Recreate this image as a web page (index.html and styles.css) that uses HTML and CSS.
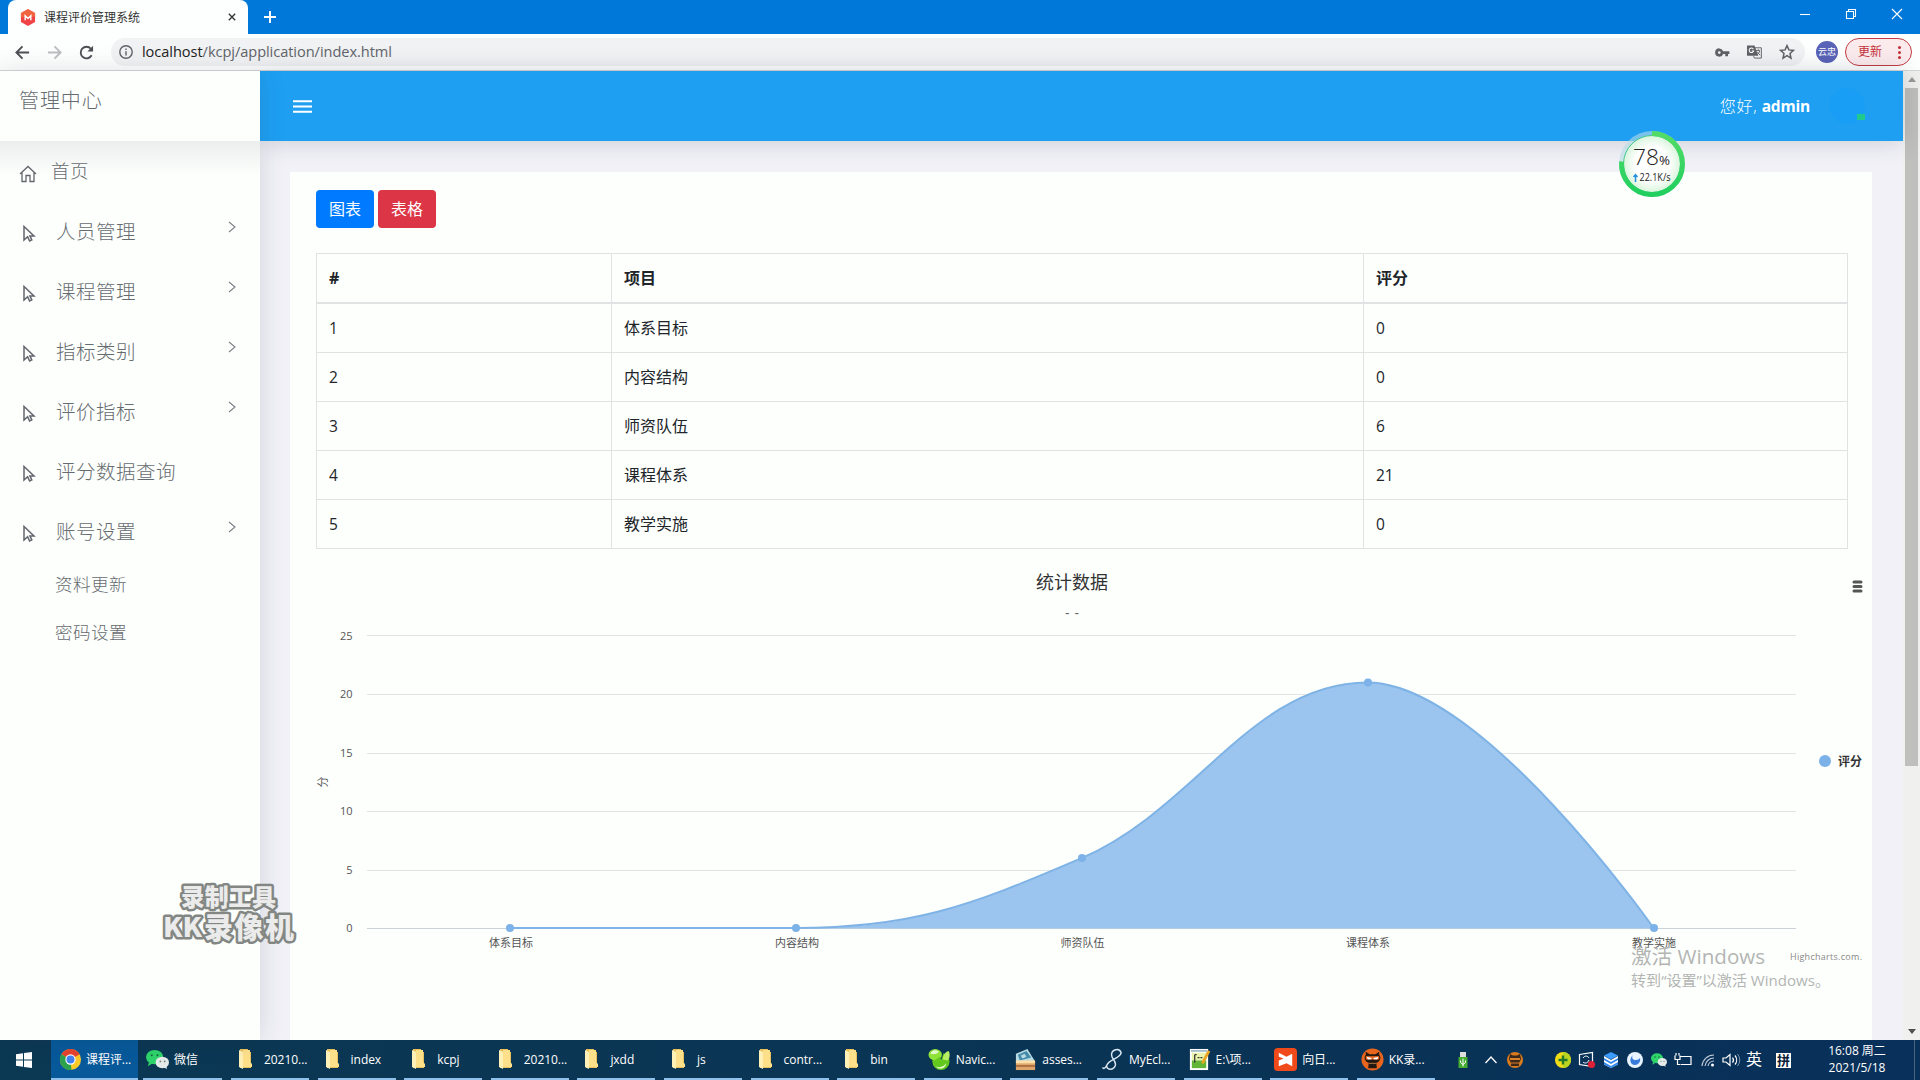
FILE: index.html
```html
<!DOCTYPE html>
<html lang="zh-CN">
<head>
<meta charset="utf-8">
<title>课程评价管理系统</title>
<link rel="stylesheet" href="styles.css">
</head>
<body>
<svg class="defs" aria-hidden="true">
  <symbol id="pointer" viewBox="0 0 14 18"><path d="M2 1.500V15l3.600-3.300L7.600 16l2.200-1-1.900-4.100H12z"/></symbol>
  <symbol id="chevron" viewBox="0 0 10 14"><path d="M2 2l6 5-6 5"/></symbol>
  <symbol id="folder" viewBox="0 0 14 20"><path fill="#e9bf5c" d="M1 0h8v3h3v16H1z"/><path fill="#ffe08a" d="M4 1h7v12l2 2v3H4z"/><path fill="#fff0b8" d="M0 1l4 2v17l-4-2z"/></symbol>
  <symbol id="wechat" viewBox="0 0 24 20"><ellipse cx="9" cy="7.500" rx="9" ry="7.500" fill="#2fd46b"/><path d="M3 13l-1 4 5-3z" fill="#2fd46b"/><ellipse cx="17" cy="13" rx="7" ry="6" fill="#e4ebe8"/><path d="M18 18l4 2-1-4z" fill="#e4ebe8"/><g fill="#126b3a"><circle cx="6" cy="5.500" r="1.100"/><circle cx="12" cy="5.500" r="1.100"/></g><g fill="#728078"><circle cx="15" cy="12" r=".9"/><circle cx="19.500" cy="12" r=".9"/></g></symbol>
  <symbol id="ninja" viewBox="0 0 24 24"><circle cx="12" cy="12" r="11.500" fill="#e8651e"/><path fill="#241812" d="M5 4l4 2.500h6L19 4v3c1 1 1.500 3 1 5-1 2-3 3.500-4 3.500l.5 5.500h-9l.5-5.500C7 15.500 5 14 4 12c-.5-2 0-4 1-5z"/><path fill="#e8651e" d="M5 8.500h14v3.500H5z"/><path fill="#fff" d="M6 9l5 1.500v1.200L7 12zM18 9l-5 1.500v1.200l4 .3z"/><path d="M8 15.500h8v1H8z" fill="#b9793f"/></symbol>
</svg>
<div class="screen">
  <header class="tabs">
    <div class="tab">
      <svg class="favicon" viewBox="0 0 16 18"><path fill="#ee4446" d="M8 0l7.500 4.200v9.600L8 18 .5 13.800V4.200z"/><path fill="#f47a3c" d="M8 0l7.500 4.200V8L.5 9V4.200z" opacity=".6"/><path d="M5 12V7l3 3 3-3v5" fill="none" stroke="#fff" stroke-width="1.500"/></svg>
      <span class="tab-title">课程评价管理系统</span>
      <svg class="tab-close" viewBox="0 0 10 10"><path d="M1 1l8 8M9 1l-8 8"/></svg>
    </div>
    <svg class="plus" viewBox="0 0 12 12"><path d="M6 0v12M0 6h12"/></svg>
    <div class="window-buttons">
      <svg viewBox="0 0 12 12"><path d="M1 6.500h10"/></svg>
      <svg viewBox="0 0 12 12"><path d="M1.500 3.500h7v7h-7zM3.500 3.500v-2h7v7h-2"/></svg>
      <svg viewBox="0 0 12 12"><path d="M1 1l10 10M11 1L1 11"/></svg>
    </div>
  </header>
  <div class="toolbar">
    <svg class="nav" viewBox="0 0 16 16"><path d="M15 8H2M8 1.500L1.500 8 8 14.500"/></svg>
    <svg class="nav dim" viewBox="0 0 16 16"><path d="M1 8h13M8 1.500L14.500 8 8 14.500"/></svg>
    <svg class="nav" viewBox="0 0 16 16"><path d="M13.500 11A6.200 6.200 0 1 1 12.700 4"/><path class="solid" d="M15 .8v6H9z"/></svg>
    <div class="address">
      <svg class="info" viewBox="0 0 14 14"><circle cx="7" cy="7" r="6.200"/><path d="M7 6.200v4.200M7 3.400v1.500"/></svg>
      <span class="url"><b>localhost</b>/kcpj/application/index.html</span>
      <svg class="key" viewBox="0 0 16 12"><path fill-rule="evenodd" d="M4.500 1.500a4.500 4.500 0 1 0 4.200 6H11V10h3V7.500h1.500v-3H8.700A4.500 4.500 0 0 0 4.500 1.500zm0 3a1.500 1.500 0 1 1 0 3 1.500 1.500 0 0 1 0-3z"/></svg>
      <svg class="translate" viewBox="0 0 16 16"><path d="M0 1h8l4 11H0z" fill="#5f6368"/><path d="M8 3.500h7.300v11H8l-1-2" fill="none" stroke="#5f6368"/><path d="M9.500 6.500h4.500M12 5v1.500M13.500 7c-.5 2-1.500 3-3 4M11 8l3 3.500" fill="none" stroke="#5f6368"/><path d="M6.800 5A2.400 2.400 0 1 0 7 7H5" fill="none" stroke="#fff" stroke-width="1.100"/></svg>
      <svg class="star" viewBox="0 0 16 16"><path d="M8 1.600l1.900 4.300 4.600.5-3.500 3.100 1 4.600L8 11.700l-4 2.400 1-4.600L1.500 6.400l4.600-.5z"/></svg>
    </div>
    <div class="avatar">云忠</div>
    <div class="update">更新<i class="dots"></i></div>
  </div>

  <div class="page">
    <aside class="sidebar">
      <div class="brand">管理中心</div>
      <nav class="menu">
        <a class="home"><svg class="house" viewBox="0 0 18 18"><path d="M1 9l8-7.500L17 9M3 7.500V16.500h4v-6h4v6h4V7.500"/></svg><span>首页</span></a>
        <a><svg class="ptr"><use href="#pointer"/></svg><span>人员管理</span><svg class="chev"><use href="#chevron"/></svg></a>
        <a><svg class="ptr"><use href="#pointer"/></svg><span>课程管理</span><svg class="chev"><use href="#chevron"/></svg></a>
        <a><svg class="ptr"><use href="#pointer"/></svg><span>指标类别</span><svg class="chev"><use href="#chevron"/></svg></a>
        <a><svg class="ptr"><use href="#pointer"/></svg><span>评价指标</span><svg class="chev"><use href="#chevron"/></svg></a>
        <a><svg class="ptr"><use href="#pointer"/></svg><span>评分数据查询</span></a>
        <a><svg class="ptr"><use href="#pointer"/></svg><span>账号设置</span><svg class="chev"><use href="#chevron"/></svg></a>
        <div class="sub">资料更新</div>
        <div class="sub">密码设置</div>
      </nav>
    </aside>
    <main class="main">
      <div class="topbar">
        <svg class="burger" viewBox="0 0 20 14"><path d="M0 1.500h20M0 7h20M0 12.500h20"/></svg>
        <div class="hello"><span>您好,</span> <b>admin</b></div>
        <div class="photo"><i></i></div>
      </div>
      <div class="content">
        <section class="card">
          <div class="buttons"><button class="blue">图表</button><button class="red">表格</button></div>
          <table class="scores">
            <colgroup><col class="c1"><col class="c2"><col></colgroup>
            <thead><tr><th>#</th><th>项目</th><th>评分</th></tr></thead>
            <tbody>
              <tr><td>1</td><td>体系目标</td><td>0</td></tr>
              <tr><td>2</td><td>内容结构</td><td>0</td></tr>
              <tr><td>3</td><td>师资队伍</td><td>6</td></tr>
              <tr><td>4</td><td>课程体系</td><td>21</td></tr>
              <tr><td>5</td><td>教学实施</td><td>0</td></tr>
            </tbody>
          </table>
          <svg class="chart" viewBox="290 549 1582 491">
            <text class="ctitle" x="1072" y="589">统计数据</text>
            <text class="csub" x="1065" y="618" textLength="14">--</text>
            <path class="burger-sm" d="M1854 582h7M1854 586.500h7M1854 591h7"/>
            <path class="grid" d="M367 635.500h1429M367 694.500h1429M367 753.500h1429M367 811.500h1429M367 870.500h1429"/>
            <path class="axis" d="M367 928.500h1429"/>
            <path class="area" d="M510 928.500C510 928.500 681.500 928.500 795.800 928.500C910.100 928.500 967.200 907.400 1081.500 858.200C1195.700 809 1252.800 682.400 1367.500 682.400C1481.300 682.400 1653.500 928.500 1653.500 928.500z"/>
            <path class="line" d="M510 928C510 928 681.500 928 795.800 928C910.100 928 967.200 907.400 1081.500 858.200C1195.700 809 1252.800 682.400 1367.500 682.400C1481.300 682.400 1653.500 928 1653.500 928"/>
            <g class="points"><circle cx="510" cy="928" r="4"/><circle cx="796" cy="928" r="4"/><circle cx="1082" cy="858" r="4"/><circle cx="1368" cy="682.500" r="4"/><circle cx="1654" cy="928" r="4"/><circle cx="1825" cy="761" r="6"/></g>
            <g class="ylab"><text x="352.500" y="640">25</text><text x="352.500" y="698">20</text><text x="352.500" y="757">15</text><text x="352.500" y="815">10</text><text x="352.500" y="874">5</text><text x="352.500" y="932">0</text></g>
            <g class="xlab"><text x="511" y="947">体系目标</text><text x="797" y="947">内容结构</text><text x="1082.500" y="947">师资队伍</text><text x="1368" y="947">课程体系</text><text x="1654" y="947">教学实施</text></g>
            <text class="ytitle" transform="translate(327 782) rotate(-90)">分</text>
            <text class="legend" x="1838" y="766">评分</text>
            <text class="credit" x="1790" y="960" textLength="72">Highcharts.com.</text>
          </svg>
        </section>
      </div>
    </main>
    <div class="scrollbar"><i class="up"></i><div class="thumb"></div><i class="down"></i></div>
  </div>

  <footer class="taskbar">
    <svg class="start" viewBox="0 0 16 16"><path d="M0 2.200L7 1.200V7.600H0zM8 1l8-1v7.600H8zM0 8.400h7v6.400l-7-1zM8 8.400h8V16l-8-1z"/></svg>
    <div class="task active"><svg viewBox="0 0 24 24"><circle cx="12" cy="12" r="11" fill="#fbc928"/><path fill="#e5432f" d="M12 12L2.500 6.500a11 11 0 0 1 19 0z"/><path fill="#2da24c" d="M12 12l1 10.900A11 11 0 0 1 2.500 6.500z"/><circle cx="12" cy="12" r="5.400" fill="#fff"/><circle cx="12" cy="12" r="4.200" fill="#4382ee"/></svg><span>课程评...</span></div>
    <div class="task wx"><svg><use href="#wechat"/></svg><span>微信</span></div>
    <div class="task"><svg class="fold"><use href="#folder"/></svg><span>20210...</span></div>
    <div class="task"><svg class="fold"><use href="#folder"/></svg><span>index</span></div>
    <div class="task"><svg class="fold"><use href="#folder"/></svg><span>kcpj</span></div>
    <div class="task"><svg class="fold"><use href="#folder"/></svg><span>20210...</span></div>
    <div class="task"><svg class="fold"><use href="#folder"/></svg><span>jxdd</span></div>
    <div class="task"><svg class="fold"><use href="#folder"/></svg><span>js</span></div>
    <div class="task"><svg class="fold"><use href="#folder"/></svg><span>contr...</span></div>
    <div class="task"><svg class="fold"><use href="#folder"/></svg><span>bin</span></div>
    <div class="task"><svg viewBox="0 0 24 24"><circle cx="13.500" cy="14" r="9" fill="#63c91e"/><path fill="#0b3654" d="M11.500 12L15 2l2 .5-3 9.500z"/><ellipse cx="7.500" cy="7" rx="7" ry="6" fill="#8ee238"/><path fill="#63c91e" d="M7 13l5-4 2 4-4 4z"/><path fill="#b7ee62" d="M15.500 12c0-4 2-8 6-9 2 3 1 8-1 10z"/><path fill="#e3facb" d="M2.500 6c1-4 6-5 9-2-2 2-5 3-9 2zM8 19c4 2 8 1 11-3 0 5-7 8-11 3z"/></svg><span>Navic...</span></div>
    <div class="task"><svg viewBox="0 0 24 24"><path fill="#b7dbe5" d="M2 6l12-5 8 13H2z"/><path fill="#458ba8" d="M4 7l9-4 5 7-12 3z"/><path fill="#b7dbe5" d="M7 8l4-2 2 3-4 2z"/><path fill="#dfa56b" d="M2 14h20v9H2z"/><path fill="#ffe0a9" d="M2 13h20v3H2z"/><path fill="#9d6037" d="M2 18h20v1.500H2z"/></svg><span>asses...</span></div>
    <div class="task"><svg viewBox="0 0 24 24"><path d="M21 5C19-1 11 2 11 7c0 5 5 6 4 11-2 6-10 5-9 0C8 12 20 11 21 5zM6 18c-2 4-4 4-4 2" fill="none" stroke="#d8e7f2" stroke-width="1.500"/></svg><span>MyEcl...</span></div>
    <div class="task"><svg viewBox="0 0 24 24"><path fill="#fff" d="M2 1h19v22H2z"/><path fill="#e9f3a9" d="M4 5h15v8H4z"/><path fill="#62b535" d="M4 13h15v8H4z"/><path d="M3 2h17v2H3z" fill="#a7bdc9"/><path fill="none" stroke="#333" stroke-width="1.300" d="M7 7v8M7 7h2M10 10h2M13 10h2"/><path d="M22 3l-7 13" stroke="#eaa522" stroke-width="3"/></svg><span>E:\项...</span></div>
    <div class="task"><svg viewBox="0 0 24 24"><rect width="24" height="24" rx="4" fill="#f04a1b"/><path fill="#fff" d="M5 5l8 4 6-3v13l-6-3-8 3v-6l5-2-5-2z"/></svg><span>向日...</span></div>
    <div class="task"><svg><use href="#ninja"/></svg><span>KK录...</span></div>
    <div class="tray">
      <svg class="usb" viewBox="0 0 20 20"><path fill="#ddd" d="M7 2h6v5H7z"/><path fill="#43ac31" d="M5.500 7h9v11h-9z"/><path d="M10 8.500v8M7.500 10.500v2l2.500 2 2.500-2v-2" fill="none" stroke="#fff"/></svg>
      <svg class="caret" viewBox="0 0 20 20"><path d="M4.500 13l5.500-6 5.500 6" fill="none" stroke="#fff" stroke-width="1.300"/></svg>
      <svg class="nin" viewBox="0 0 20 20"><circle cx="10" cy="10" r="8" fill="#d87a1d"/><path fill="#3b2718" d="M5 4l3 1.500h4L15 4l1 5-2 4v3H6v-3L4 9z"/><path fill="#d9812c" d="M5 8h10v2H5zM6 12.500h8v1H6z"/></svg>
      <svg viewBox="0 0 20 20"><circle cx="10" cy="10" r="8" fill="#f1dc18"/><path d="M10 2a8 8 0 0 1 0 16z" fill="#b9d421"/><path d="M10 5.500v9M5.500 10h9" stroke="#24782a" stroke-width="2.400"/></svg>
      <svg viewBox="0 0 20 20"><path d="M2.500 4.500l13-2v14l-13-2z" fill="none" stroke="#fff" stroke-width="1.200"/><path d="M6 8c2-3 5-2 6 0M12 10c-1 3-4 4-6 2" fill="none" stroke="#fff"/><circle cx="14.500" cy="14.500" r="3.600" fill="#e02036"/></svg>
      <svg viewBox="0 0 20 20"><path fill="#3b9bff" d="M10 2l7 3.500-7 4-7-4z"/><path fill="#fff" d="M3 6l7 4 7-4v8.500L10 18l-7-3.500z"/><path fill="#2f86ed" d="M3 8l7 4 7-4v2l-7 4-7-4zM3 12l7 4 7-4v2.500L10 18l-7-3.500z"/></svg>
      <svg viewBox="0 0 20 20"><circle cx="10" cy="10" r="8" fill="#e7f3ff"/><path fill="#397bdd" d="M8 5c-2 3 0 5 3 5 2 0 3-1 4-2 1 4-2 7-5 7-4 0-7-5-2-10z"/></svg>
      <svg><use href="#wechat" x="2" y="3" width="16" height="14"/></svg>
      <svg viewBox="0 0 20 20"><path fill="none" stroke="#fff" stroke-width="1.200" d="M7 6.500h11v8H8M2 5.500v4h5v-4M4.500 9.500v5h3M3 3v2.500M6 3v2.500"/></svg>
      <svg class="wifi" viewBox="0 0 20 20"><path fill="none" stroke="#c3ced8" stroke-width="1.100" d="M4 16A12 12 0 0 1 16 5M7 16a9 9 0 0 1 9-8M10 16a6 6 0 0 1 6-5"/><circle cx="14.500" cy="15" r="1.500" fill="#fff"/></svg>
      <svg class="sound" viewBox="0 0 20 20"><path fill="none" stroke="#fff" stroke-width="1.200" d="M2 8v4h3l4 3.500v-11L5 8zM11.500 7.500a4 4 0 0 1 0 5M14 5.500a7 7 0 0 1 0 9"/><path d="M16.500 4a9 9 0 0 1 0 12" fill="none" stroke="#7a93aa"/></svg>
      <span class="lang">英</span><span class="ime">拼</span>
      <div class="clock"><span>16:08 周二</span><span>2021/5/18</span></div>
      <i class="peek"></i>
    </div>
  </footer>

  <svg class="ball" viewBox="0 0 70 70">
    <defs><radialGradient id="glow"><stop offset=".6" stop-color="#fff"/><stop offset="1" stop-color="#d9f5dc"/></radialGradient><linearGradient id="ring" x2="0" y2="1"><stop stop-color="#52dc66"/><stop offset="1" stop-color="#20cf5e"/></linearGradient></defs>
    <circle cx="35" cy="35" r="33" fill="#b5dce5" opacity=".6"/>
    <circle cx="35" cy="35" r="28.500" fill="url(#glow)" stroke="#43c98b"/>
    <path d="M35 4.500A30.500 30.500 0 1 1 4.600 32.500" fill="none" stroke="url(#ring)" stroke-width="5"/>
    <text class="pct" x="16" y="36" textLength="26" lengthAdjust="spacingAndGlyphs">78</text><text class="pc" x="42" y="36" textLength="11" lengthAdjust="spacingAndGlyphs">%</text>
    <path d="M18.500 53v-7M16.500 48l2-2.300 2 2.300" fill="none" stroke="#2791dc" stroke-width="1.500"/>
    <text class="rate" x="22.500" y="52" textLength="31" lengthAdjust="spacingAndGlyphs">22.1K/s</text>
  </svg>
  <svg class="recorder" viewBox="150 870 160 86">
    <text x="181" y="906" font-size="24" textLength="95">录制工具</text>
    <text x="163" y="937" font-size="27" textLength="39" lengthAdjust="spacingAndGlyphs">KK</text>
    <text x="204" y="939" font-size="29" textLength="90">录像机</text>
  </svg>
  <svg class="activate" viewBox="1630 940 210 60">
    <text x="1631" y="964" font-size="20.500" textLength="134" lengthAdjust="spacingAndGlyphs">激活 Windows</text>
    <text x="1631" y="986" font-size="15" textLength="199" lengthAdjust="spacingAndGlyphs">转到“设置”以激活 Windows。</text>
  </svg>
</div>
</body>
</html>
```
FILE: styles.css
```css
* { box-sizing: border-box; }
body { margin: 0; overflow: hidden; font-family: "Open Sans", "Noto Sans CJK SC", sans-serif; color: #212529; }
svg { display: block; flex: none; }
.defs { position: absolute; width: 0; height: 0; }
.screen { position: relative; width: 1920px; height: 1080px; display: flex; flex-direction: column; background: #fdfffd; }

/* browser window */
.tabs { height: 34px; flex: none; display: flex; align-items: center; background: #0078d9; }
.tab { width: 240px; height: 34px; margin-left: 8px; padding: 0 12px; display: flex; align-items: center; background: #fdfffe; border-radius: 8px 8px 0 0; }
.favicon { width: 16px; height: 17px; }
.tab-title { margin-left: 8px; font-size: 12px; flex: 1; color: #333; }
.tab-close { width: 8px; height: 8px; fill: none; stroke: #333; stroke-width: 1.7; }
.plus { width: 12px; height: 12px; margin-left: 16px; fill: none; stroke: #fff; stroke-width: 2; }
.window-buttons { margin-left: auto; padding-right: 17px; display: flex; gap: 34px; transform: translateY(-3px); }
.window-buttons svg { width: 12px; height: 12px; fill: none; stroke: #fff; stroke-width: 1.1; }
.toolbar { height: 37px; flex: none; display: flex; align-items: center; padding-left: 15px; background: #fdfffe; border-bottom: 1px solid #d5d6d8; }
.nav { width: 15px; height: 15px; margin-right: 17px; fill: none; stroke: #4c4f53; stroke-width: 2; }
.nav .solid { fill: #4c4f53; stroke: none; }
.nav.dim { stroke: #bcbec0; }
.address { width: 1694px; height: 28px; padding-left: 8px; border-radius: 14px; background: #f1f2f3; display: flex; align-items: center; }
.info { width: 14px; height: 14px; fill: none; stroke: #5f6368; stroke-width: 1.4; }
.url { margin: -2px 0 0 9px; flex: 1; font-family: "Open Sans", sans-serif; font-size: 14.6px; letter-spacing: -.06px; color: #60646a; }
.url b { font-weight: 400; color: #222; }
.key { width: 15px; height: 11px; fill: #5f6368; margin-right: 17px; }
.translate { width: 15px; height: 16px; margin-right: 17px; }
.star { width: 16px; height: 16px; fill: none; stroke: #5f6368; stroke-width: 1.5; margin-right: 10px; }
.avatar { width: 22px; height: 22px; margin-left: 11px; border-radius: 50%; background: #5963b7; color: #fff; font-size: 9px; line-height: 22px; text-align: center; white-space: nowrap; }
.update { width: 67px; height: 28px; margin-left: 7px; padding-left: 12px; border: 1px solid #c33a42; border-radius: 14px; background: #fcebed; color: #c5303a; font-size: 12px; line-height: 26px; display: flex; gap: 16px; align-items: center; }
.dots { width: 3px; height: 3px; border-radius: 50%; background: #c5303a; box-shadow: 0 -5px #c5303a, 0 5px #c5303a; }

/* page */
.page { height: 969px; flex: none; display: flex; background: #f1f1f7; }
.sidebar { width: 260px; background: #fdfffd; box-shadow: 0 0 24px rgba(40, 40, 70, .14); z-index: 1; color: #666b70; font-weight: 300; font-family: "Noto Sans CJK SC", sans-serif; }
.brand { height: 70px; padding: 14px 0 0 19px; font-size: 20px; line-height: 30px; letter-spacing: .9px; }
.menu { background: linear-gradient(#eceeed, #fdfffd 34px); }
.menu a { height: 60px; display: flex; align-items: center; padding-left: 22px; font-size: 19.500px; letter-spacing: .5px; }
.ptr { width: 14px; height: 18px; margin: 5px 20px 0 0; fill: none; stroke: #62676d; stroke-width: 1.5; }
.menu a span { margin-top: -2px; }
.menu .home span { margin-top: -3px; font-size: 18.500px; }
.house { width: 18px; height: 18px; margin: 5px 14px 0 -3px; fill: none; stroke: #62676d; stroke-width: 1.3; }
.chev { width: 10px; height: 14px; margin: -9px 23px 0 auto; fill: none; stroke: #7b8085; stroke-width: 1.1; }
.sub { height: 48px; padding-left: 55px; font-size: 17.500px; letter-spacing: .5px; line-height: 46px; }
.main { width: 1643px; display: flex; flex-direction: column; }
.topbar { height: 70px; flex: none; padding-left: 33px; display: flex; align-items: center; background: #1e9ff2; color: #fff; box-shadow: 0 0 25px rgba(40, 40, 70, .2); z-index: 0; }
.burger { width: 19px; height: 15px; stroke: #fff; stroke-width: 2; }
.hello { margin: -2px 19px 0 auto; font-size: 16px; font-weight: 300; }
.hello span { letter-spacing: .8px; }
.hello b { font-family: "Open Sans", sans-serif; font-weight: 700; font-size: 15.500px; letter-spacing: -.2px; }
.photo { width: 36px; height: 36px; margin-right: 38px; border-radius: 50%; background: #189ff5; display: flex; align-items: flex-end; justify-content: flex-end; }
.photo i { width: 8px; height: 6px; background: #20c98c; margin-bottom: 4px; }
.content { flex: 1; min-height: 0; padding: 31px 31px 0 30px; }
.card { height: 868px; background: #fdfffd; padding-top: 18px; overflow: hidden; }
.buttons { display: flex; gap: 4px; padding-left: 26px; margin-bottom: 25px; }
.buttons button { width: 58px; height: 38px; padding: 0 0 2px; border: 0; border-radius: 4px; color: #fff; font: 16px "Noto Sans CJK SC", sans-serif; }
.blue { background: #007bff; }
.red { background: #dc3545; }
.scores { width: 1532px; margin-left: 26px; border-collapse: collapse; table-layout: fixed; font-size: 15.500px; line-height: 24px; }
.c1 { width: 295px; }
.c2 { width: 752px; }
.scores th, .scores td { height: 49px; padding: 12px; border: 1px solid #dfe3e4; text-align: left; line-height: 24px; }
.scores th { border-bottom-width: 2px; font-size: 16px; }
.scores th, .scores td:nth-child(2) { font-size: 16px; }

/* chart */
.chart { width: 1582px; height: 491px; font-family: "Open Sans", "Noto Sans CJK SC", sans-serif; }
.ctitle { font-size: 18px; fill: #333; text-anchor: middle; }
.csub { font-size: 14px; fill: #666; }
.burger-sm { stroke: #555; stroke-width: 3; stroke-linecap: round; }
.grid { stroke: #e2e4e4; }
.axis { stroke: #ccd2da; }
.area { fill: #9bc5ee; }
.line { fill: none; stroke: #7fb3e6; stroke-width: 2; }
.points { fill: #7cb2e8; }
.ylab { font-size: 11px; fill: #555; text-anchor: end; }
.xlab { font-size: 11px; fill: #555; text-anchor: middle; }
.ytitle { font-size: 11px; fill: #555; text-anchor: middle; }
.legend { font-size: 12px; font-weight: 700; fill: #333; }
.credit { font-size: 9px; fill: #888; }

.scrollbar { width: 17px; display: flex; flex-direction: column; align-items: center; background: #f0f1ee; }
.thumb { width: 13px; height: 678px; margin-top: 6px; background: #bfc0bc; }
.up, .down { width: 0; height: 0; border: 4px solid transparent; border-top: 0; border-bottom: 5px solid #999; margin-top: 6px; }
.down { border-bottom: 0; border-top: 5px solid #505050; margin: auto 0 6px; }

/* taskbar */
.taskbar { height: 40px; flex: none; display: flex; align-items: stretch; background: linear-gradient(90deg, #0b3853, #0a3454 55%, #08305a); color: #fff; font-size: 12px; }
.start { width: 16px; height: 16px; margin: 12px 19px 0 16px; fill: #fff; }
.task { width: 78px; flex: none; margin-right: 8.6px; padding-left: 4px; display: flex; align-items: center; border-bottom: 2px solid #8fc1ea; white-space: nowrap; letter-spacing: -.05px; }
.task svg { width: 23px; height: 23px; margin-right: 5px; }
.task .fold { width: 14px; height: 20px; margin: 0 11px 0 4px; }
.task.active { width: 87px; margin-right: 5px; padding-left: 8px; background: #07599a; }
.task.active svg { margin-right: 4px; }
.task.wx { width: 79px; margin-right: 9px; padding-left: 3px; }
.tray { margin-left: auto; display: flex; align-items: center; height: 40px; }
.tray svg { width: 20px; height: 20px; margin: 0 2px; }
.tray .usb { margin-right: 6px; }
.tray .nin { margin-right: 26px; }
.tray .wifi { margin-left: 3px; }
.tray .sound { margin: 0 1px; }
.lang { width: 24px; font-size: 16px; line-height: 22px; margin-top: -2px; text-align: center; }
.ime { width: 15px; height: 15px; margin: 0 23px 0 10px; background: #fff; color: #082038; font-size: 13px; line-height: 15px; text-align: center; font-weight: 700; }
.clock { width: 86px; display: flex; flex-direction: column; align-items: center; line-height: 17px; font-size: 12px; margin-top: -2px; }
.peek { width: 1px; height: 40px; margin: 0 5px 0 14px; background: #49667f; }

/* floating overlays */
.ball { position: absolute; left: 1617px; top: 129px; width: 70px; height: 70px; z-index: 3; font-family: "Open Sans", sans-serif; }
.pct { font-size: 22px; font-weight: 300; fill: #222; }
.pc { font-size: 12px; fill: #222; }
.rate { font-size: 10px; fill: #222; }
.recorder { position: absolute; left: 150px; top: 870px; width: 160px; height: 86px; z-index: 3; font-family: "Noto Sans CJK SC", sans-serif; font-weight: 900; fill: #ebebeb; stroke: #838783; stroke-width: 5px; stroke-linejoin: round; paint-order: stroke; }
.activate { position: absolute; left: 1630px; top: 940px; width: 210px; height: 60px; z-index: 3; font-family: "Open Sans", "Noto Sans CJK SC", sans-serif; fill: #b3b5b3; }
```
